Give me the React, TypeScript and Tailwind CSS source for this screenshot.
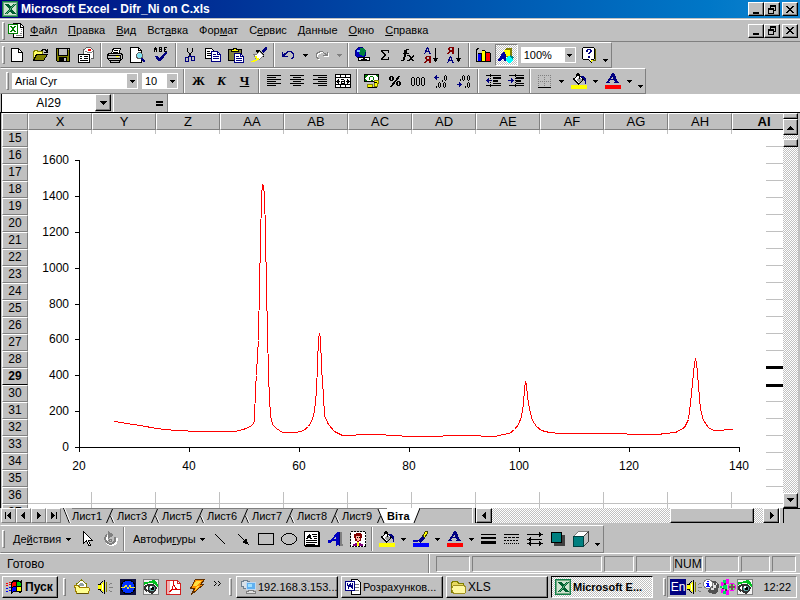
import type { ReactNode } from 'react';

const columns = ['X', 'Y', 'Z', 'AA', 'AB', 'AC', 'AD', 'AE', 'AF', 'AG', 'AH', 'AI'];
const rows = Array.from({ length: 23 }, (_, i) => i + 15);
const sheets = ['Лист1', 'Лист3', 'Лист5', 'Лист6', 'Лист7', 'Лист8', 'Лист9'];

// text before the accelerator, the accelerator, text after it
const menus = [
  ['', 'Ф', 'айл'],
  ['', 'П', 'равка'],
  ['', 'В', 'ид'],
  ['Вст', 'а', 'вка'],
  ['Фор', 'м', 'ат'],
  ['С', 'е', 'рвис'],
  ['', 'Д', 'анные'],
  ['', 'О', 'кно'],
  ['', 'С', 'правка'],
];

const raised = 'border border-t-white border-l-white border-r-black border-b-black bg-[#c0c0c0] shadow-[inset_-1px_-1px_#808080]';
const sunken = 'border border-t-[#808080] border-l-[#808080] border-r-white border-b-white';
const dither = 'bg-[repeating-conic-gradient(#c0c0c0_0_25%,#fff_0_50%)] bg-size-[2px_2px]';

function Icon({ children, w = 16 }: { children: ReactNode; w?: number }) {
  return (
    <svg width={w} height="16" viewBox={`0 0 ${w} 16`} fill="none" shapeRendering="crispEdges" className="shrink-0" aria-hidden="true">
      {children}
    </svg>
  );
}

function Tool({ label, children, on }: { label: string; children: ReactNode; on?: boolean }) {
  return (
    <button
      aria-label={label}
      className={`flex h-[22px] w-[23px] shrink-0 items-center justify-center ${on ? `${sunken} ${dither}` : ''}`}
    >
      {children}
    </button>
  );
}

function Caret({ gray }: { gray?: boolean }) {
  return (
    <svg width="5" height="3" viewBox="0 0 5 3" shapeRendering="crispEdges" className="shrink-0" aria-hidden="true">
      <path d="M0 0h5v1H0zM1 1h3v1H1zM2 2h1v1H2z" fill={gray ? '#808080' : '#000'} />
    </svg>
  );
}

function Drop({ label, gray }: { label: string; gray?: boolean }) {
  return (
    <button aria-label={label} className="flex h-[22px] w-[11px] shrink-0 items-center justify-center">
      <Caret gray={gray} />
    </button>
  );
}

function More({ label }: { label: string }) {
  return (
    <button aria-label={label} className="flex h-[22px] w-[11px] shrink-0 items-end justify-center pb-1">
      <Caret />
    </button>
  );
}

function Sep() {
  return (
    <div className="flex h-6 w-[6px] shrink-0 justify-center">
      <div className="w-[2px] border-l border-l-[#808080] bg-white" />
    </div>
  );
}

function Grip() {
  return <div className="h-[18px] w-[3px] shrink-0 border border-t-white border-l-white border-r-[#808080] border-b-[#808080]" />;
}

function Combo({ label, value, width }: { label: string; value: string; width: string }) {
  return (
    <div className={`relative h-4 shrink-0 bg-white ${width}`}>
      <select aria-label={label} className="block h-4 w-full appearance-none pl-[3px] text-[11px] leading-4 outline-none">
        <option>{value}</option>
      </select>
      <span className="pointer-events-none absolute inset-y-px right-px flex w-[10px] items-center justify-center bg-[#c0c0c0]">
        <Caret />
      </span>
    </div>
  );
}

function ExcelIcon() {
  return (
    <Icon>
      <path d="M0 0h16v16H0z" fill="#108048" />
      <path d="M1.5 1.5h13v13h-13z" fill="#d0e4d0" stroke="#70a880" />
      <path d="M3 3h4l2 3 2-3h3l-4 5 4 5h-4l-2-3-2 3H3l4-5z" fill="#006030" />
      <path d="M12 3h1l-8 10H4z" fill="#60b080" />
    </Icon>
  );
}

function WorkbookIcon() {
  return (
    <Icon>
      <path d="M5.5.5h7l3 3v11h-10z" fill="#fff" stroke="#000" />
      <path d="M12 1v3h3" stroke="#000" />
      <path d="M13 6h1M13 8h1M8 12.5h6M12 10.5h2" stroke="#808080" />
      <path d="M.5 1.5h9v9h-9z" fill="#fff" stroke="#008000" />
      <path d="M2 3h2l1 2 1-2h2L6 6l2 3H6L5 7 4 9H2l2-3z" fill="#008000" />
    </Icon>
  );
}

function WindowButtons() {
  return (
    <div className="flex gap-[2px]">
      <div className="flex">
        <button aria-label="Свернуть" className={`flex h-[14px] w-4 items-center justify-center ${raised}`}>
          <svg width="10" height="9" viewBox="0 0 10 9" shapeRendering="crispEdges" aria-hidden="true"><path d="M2 7h6v2H2z" /></svg>
        </button>
        <button aria-label="Восстановить" className={`flex h-[14px] w-4 items-center justify-center ${raised}`}>
          <svg width="10" height="9" viewBox="0 0 10 9" fill="none" stroke="#000" shapeRendering="crispEdges" aria-hidden="true">
            <path d="M3.5 3V.5h5v5H7M3 1.5h6M1.5 3.5h5v5h-5zM1 4.5h6" />
          </svg>
        </button>
      </div>
      <button aria-label="Закрыть" className={`flex h-[14px] w-4 items-center justify-center ${raised}`}>
        <svg width="10" height="9" viewBox="0 0 10 9" shapeRendering="crispEdges" aria-hidden="true">
          <path d="M1 1h2v1h1v1h2V2h1V1h2v1H8v1H7v1H6v1h1v1h1v1h1v1H7V7H6V6H4v1H3v1H1V7h1V6h1V5h1V4H3V3H2V2H1z" />
        </svg>
      </button>
    </div>
  );
}

function Bucket({ color }: { color: string }) {
  return (
    <Icon>
      <path d="M2.500 6l5-4 5 4-5 5z" fill="#fff" stroke="#000" />
      <path d="M5 7l3-3 3 3-3 3z" fill="#a0a0a0" />
      <path d="M8.500 6V1.500h-1v-1h-1v1h-1V4" stroke="#000" />
      <path d="M10 3h3v1h1v1h1v6h-1V8h-1V6h-1V5h-2z" fill="#000080" />
      <path d="M0 12h16v4H0z" fill={color} />
    </Icon>
  );
}

function FontColor() {
  return (
    <Icon>
      <path d="M7 0h2l4 9h1v1H9V9h1L9 7H5L4 9h1v1H1V9h1l4-7zM8 3L6 6h2z" fill="#000080" fillRule="evenodd" />
      <path d="M0 12h16v4H0z" fill="#f00" />
    </Icon>
  );
}

function Lines({ rows: lines }: { rows: [number, number][] }) {
  return (
    <Icon>
      {lines.map(([x, w], i) => (
        <path key={i} d={`M${x} ${i * 2 + 2.5}h${w}`} stroke="#000" />
      ))}
    </Icon>
  );
}

function EyeIcon() {
  return (
    <Icon>
      <path d="M.5.5h15v15H.5z" fill="#f4f4f4" stroke="#808080" />
      <path d="M1 3l4 0 5-2 3 1 2 4v3l-3-4-5-1-4 1-2 1z" fill="#00c020" />
      <path d="M1 7l4-2 5 0 4 3-1 4-4 3-5-3 0 2-3-4z" fill="#303030" />
      <path d="M2 9l3-2v4z" fill="#fff" />
      <circle cx="9" cy="9.5" r="3" fill="#60a0a0" />
      <path d="M8 8h3v3H8z" fill="#000" />
      <path d="M7 7h2v2H7z" fill="#fff" />
    </Icon>
  );
}

function SpeakerIcon() {
  return (
    <Icon>
      <path d="M1 6h3l4-5v14l-4-5H1z" fill="#ff0" />
      <path d="M1 5.500h2M1 10.500h2M3.500 4v2M4.500 3v1M5.500 2v1M3.500 10v2M4.500 12v1M5.500 13v1M7.500 1v14" stroke="#000" />
      <path d="M5 5h1v6H5z" fill="#fff" />
      <path d="M9 3h1v10H9z" fill="#808000" />
      <path d="M12 5.500h1M13 4.500h2M12 8.500h4M12 11.500h1M13 12.500h2" stroke="#808080" />
    </Icon>
  );
}

function FolderIcon() {
  return (
    <Icon>
      <path d="M1.5 4.5l1-2h5l1 2h5v9h-12z" fill="#e8d860" stroke="#808000" />
      <path d="M3.5 6.5h11l1 2v5l-1 1h-11l-2-5z" fill="#fff8a0" stroke="#a09020" />
    </Icon>
  );
}

function StandardBar() {
  return (
    <div className="flex h-[26px] w-[612px] items-center border border-t-white border-l-transparent border-r-[#808080] border-b-[#808080] pl-px">
      <Grip />
      <div className="w-px" />
      <Tool label="Создать">
        <Icon>
          <path d="M2.5 1.5h7l4 4v9h-11z" fill="#fff" stroke="#000" />
          <path d="M9.5 1.5v4h4" stroke="#000" />
        </Icon>
      </Tool>
      <Tool label="Открыть">
        <Icon>
          <path d="M9 3.5h1v-1h3v1h1v1M15.5 2v3.5H12" stroke="#000" />
          <path d="M1.5 13.5v-9h1v-1h3v1h5v3" fill="#ffff80" stroke="#808000" />
          <path d="M1.5 13.5l3-6h11l-4 6z" fill="#808000" stroke="#000" />
          <path d="M2 5h8v2H4l-2 4z" fill="#ffff60" />
        </Icon>
      </Tool>
      <Tool label="Сохранить">
        <Icon>
          <path d="M1.5 1.5h13v13h-12l-1-1z" fill="#808000" stroke="#000" />
          <path d="M4 2h8v6H4z" fill="#c0c0c0" />
          <path d="M3.5 2v6.5h9V2" stroke="#000" />
          <path d="M4 10h8v4H4z" fill="#000" />
          <path d="M9 11h2v3H9zM13 2h1v1h-1z" fill="#c0c0c0" />
        </Icon>
      </Tool>
      <Tool label="Сообщение">
        <Icon>
          <path d="M5.5 7V3l3-2.500h4l3 3v8h-3" fill="#fff" stroke="#606060" />
          <path d="M7 4.500h2M9 5.500h5M14 4.500h1" stroke="#808080" />
          <path d="M10 2h3v2h-3z" fill="#f00" />
          <path d="M.5 7.5h11v8H.5z" fill="#fff" stroke="#000" />
          <path d="M2 9.5h2M6 9.5h4M2 11.5h2M6 11.5h4M2 13.5h8" stroke="#000" />
        </Icon>
      </Tool>
      <Sep />
      <Tool label="Печать">
        <Icon>
          <path d="M4.500 6l2-4.500h7L12 6z" fill="#fff" stroke="#000" />
          <path d="M7 3.5h4M6 5.5h5" stroke="#000" />
          <path d="M.5 7.5l2-1h11l2 1v4l-2 2h-11l-2-2z" fill="#c0c0c0" stroke="#000" />
          <path d="M1 8.5h12M1 11.5h12M13.5 8v5M3 13v2.5h9V13" stroke="#000" />
          <path d="M9 9h3v1H9z" fill="#ff0" />
        </Icon>
      </Tool>
      <Tool label="Предварительный просмотр">
        <Icon>
          <path d="M.5.5h8l3 3v12H.5z" fill="#fff" stroke="#000" />
          <path d="M8.5.5v3h3" stroke="#000" />
          <circle cx="9.5" cy="8.5" r="3" fill="#80e0f0" stroke="#606060" />
          <path d="M11 11h2v1h1v1h1v2h-2v-1h-1v-1h-1z" fill="#000080" />
        </Icon>
      </Tool>
      <Tool label="Орфография">
        <Icon>
          <path d="M1 5V1h1V0h1v1h1v4H3V3H2v2zM6 0h3v5H6zM7 1v1h1V1zM7 3v1h1V3zM11 0h3v1h-2v1h1v1h-1v1h2v1h-3z" fill="#000" fillRule="evenodd" />
          <path d="M2 9h2l2 2 7-6h1v1l-6 8H5z" fill="#000080" />
        </Icon>
      </Tool>
      <Sep />
      <Tool label="Вырезать">
        <Icon>
          <path d="M5.5 1v3l4 6M10.5 1v3l-4 6" stroke="#000" />
          <path d="M3.5 10.5h3v4h-3zM9.5 9.5h3v4h-3z" stroke="#000080" />
          <path d="M7 8h2v2H7z" fill="#000080" />
        </Icon>
      </Tool>
      <Tool label="Копировать">
        <Icon>
          <path d="M.5 1.5h6l3 3v7h-9z" fill="#fff" stroke="#000" />
          <path d="M2 4.5h3M2 6.5h5M2 8.5h5" stroke="#000" />
          <path d="M6.5 4.5h6l3 3v7h-9z" fill="#fff" stroke="#000080" />
          <path d="M12.5 4.5v3h3M8 7.5h3M8 9.5h6M8 11.5h6" stroke="#000080" />
        </Icon>
      </Tool>
      <Tool label="Вставить">
        <Icon>
          <path d="M.5 2.5h13v11H.5z" fill="#808040" stroke="#000" />
          <path d="M3.500 4.500v-2h2v-1h3v1h2v2z" fill="#ff0" stroke="#000" />
          <path d="M6.5 6.5h6l3 3v6h-9z" fill="#fff" stroke="#000080" />
          <path d="M12.5 6.5v3h3M8 9.5h3M8 11.5h6M8 13.5h6" stroke="#000080" />
        </Icon>
      </Tool>
      <Tool label="Формат по образцу">
        <Icon>
          <path d="M14 0h2v2l-4 4-2-2z" fill="#000080" />
          <path d="M5 3h3l5 5v2h-2L5 5z" fill="#000" />
          <path d="M2.500 7.500h3l3-3 4 4-4 4h-3z" fill="#fff" stroke="#808080" />
          <path d="M4 9h2v2h2v2H6v1H4v1H0v-1h2v-1h3v-2H4z" fill="#ff0" />
        </Icon>
      </Tool>
      <Sep />
      <Tool label="Отменить">
        <Icon>
          <path d="M2 5h1v2h1V6h2V5h1V4h5v1h1v1h1v5h-1v1h-2v-1h1v-1h1V7h-1V6h-1V5H8v1H7v1H6v1H5v1h3v1H2z" fill="#000080" />
        </Icon>
      </Tool>
      <Drop label="Список отмены" />
      <Tool label="Вернуть">
        <Icon>
          <path d="M15 6h-1v2h-1V7h-2V6h-1V5H6v1H4v1H3v5h1v1h2v-1H5v-1H4V8h1V7h2V6h3v1h1v1h1v1h-2v1h5z" fill="#fff" />
          <path d="M14 5h-1v2h-1V6h-2V5H9V4H5v1H3v1H2v5h1v1h2v-1H4v-1H3V7h1V6h2V5h3v1h1v1h1v1H9v1h5z" fill="#808080" />
        </Icon>
      </Tool>
      <Drop label="Список возврата" gray />
      <Sep />
      <Tool label="Гиперссылка">
        <Icon>
          <circle cx="6.500" cy="6" r="5.5" fill="#0000c0" stroke="#000080" />
          <path d="M6 1h4l2 3-2 5-4-1-1-3z" fill="#008040" />
          <path d="M3 3h3v2H3z" fill="#80c0ff" />
          <path d="M4.5 10.5h5v3h-5zM10.5 10.5h5v3h-5z" fill="#fff" stroke="#000" />
          <path d="M7 12h6" stroke="#000" />
        </Icon>
      </Tool>
      <Tool label="Автосумма">
        <Icon>
          <path d="M4 3h8v3h-1V4H6l3 4-3 4h5v-2h1v3H4v-1l3-4-3-4z" fill="#000" />
        </Icon>
      </Tool>
      <Tool label="Вставка функции">
        <Icon>
          <path d="M6 2h3v1H7v3h2v1H6l-1 6H4v1H1v-1h2l1-6H3V6h1V3h2z" fill="#000" />
          <path d="M7 8h2l2 2 2-2h1v1l-2 2 1 2h1v1h-2l-1-2-2 2H7v-1h1l2-2-1-2H7z" fill="#000" />
        </Icon>
      </Tool>
      <Tool label="Сортировка по возрастанию">
        <Icon>
          <path d="M4 0h1l3 7H6V5H3L2 7H1zM4 2v2h1V2z" fill="#000080" />
          <path d="M3 9h5v7H6v-2H4l-2 2H1l2-3-1-1v-2zM4 10v2h2v-2z" fill="#800000" fillRule="evenodd" />
          <path d="M12 1h1v10h2l-2 4h-1l-2-4h2z" fill="#000" />
        </Icon>
      </Tool>
      <Tool label="Сортировка по убыванию">
        <Icon>
          <path d="M3 0h5v7H6V5H4L2 7H1l2-3-1-1V1zM4 1v2h2V1z" fill="#800000" fillRule="evenodd" />
          <path d="M4 9h1l3 7H6v-2H3l-1 2H1zM4 11v2h1v-2z" fill="#000080" fillRule="evenodd" />
          <path d="M12 1h1v10h2l-2 4h-1l-2-4h2z" fill="#000" />
        </Icon>
      </Tool>
      <Sep />
      <Tool label="Мастер диаграмм">
        <Icon>
          <path d="M1.5 14V3l2-2M1 14.5h15" stroke="#000" />
          <path d="M3.500 7.500l1-1h1v7h-2z" fill="#00f" stroke="#00f" />
          <path d="M6.500 6v8M10.500 4v10M15.500 6v8M3 6.500h3M7 3.500h3M11 5.500h4" stroke="#000" />
          <path d="M7 4h3v10H7z" fill="#ff0" />
          <path d="M11 6h4v8h-4z" fill="#f00" />
        </Icon>
      </Tool>
      <Tool label="Рисование" on>
        <Icon>
          <path d="M6 3l2-2h6v7l-2 2H6z" fill="#808000" />
          <path d="M6 3h6v6H6z" fill="#ff0" />
          <path d="M0 13l5-8h2l2 8v1H6v-2H4l-1 2H0z" fill="#0000a0" />
          <path d="M8 11l3-2 4 1v3l-2 3h-3l-2-2z" fill="#0ff" />
          <path d="M12 8l4 2-1 3-3-3z" fill="#008080" />
        </Icon>
      </Tool>
      <Combo label="Масштаб" value="100%" width="ml-[3px] w-[55px]" />
      <div className="w-[2px]" />
      <Tool label="Справка">
        <Icon>
          <path d="M2.5.5h10l1 1v10l-1 1h-2v3l-3-3h-5l-1-1v-10z" fill="#fff" stroke="#000" />
          <path d="M14.5 2v11.5H12" stroke="#606000" />
          <path d="M10 13h2v1h-1v1h-1z" fill="#ff0" />
          <path d="M5 3h1V2h4v1h1v2h-1v1H9v1H7V6h1V5h1V3H7v2H5zM7 9h2v2H7z" fill="#000080" />
        </Icon>
      </Tool>
      <More label="Другие кнопки стандартной панели" />
    </div>
  );
}

function FormattingBar() {
  return (
    <div className="flex h-[26px] w-[646px] items-center border border-t-white border-l-transparent border-r-[#808080] border-b-[#808080] pl-[5px]">
      <Grip />
      <Combo label="Шрифт" value="Arial Cyr" width="ml-[3px] w-[126px]" />
      <Combo label="Размер" value="10" width="ml-1 mr-[3px] w-[36px]" />
      <Sep />
      <Tool label="Полужирный"><span className="font-['Liberation_Serif'] text-[13px] leading-4 font-bold">Ж</span></Tool>
      <Tool label="Курсив"><span className="font-['Liberation_Serif'] text-[13px] leading-4 font-bold italic">К</span></Tool>
      <Tool label="Подчеркнутый"><span className="font-['Liberation_Serif'] text-[13px] leading-4 font-bold underline">Ч</span></Tool>
      <Sep />
      <Tool label="По левому краю"><Lines rows={[[1, 14], [1, 9], [1, 14], [1, 9], [1, 14], [1, 9]]} /></Tool>
      <Tool label="По центру"><Lines rows={[[1, 14], [4, 8], [1, 14], [4, 8], [1, 14], [4, 8]]} /></Tool>
      <Tool label="По правому краю"><Lines rows={[[1, 14], [6, 9], [1, 14], [6, 9], [1, 14], [6, 9]]} /></Tool>
      <Tool label="Объединить и поместить в центре">
        <Icon>
          <path d="M.5 1.5h15v13H.5z" fill="#fff" stroke="#000" />
          <path d="M0 4.5h16M0 11.5h16M5.5 1v3M10.5 1v3M5.5 12v3M10.5 12v3" stroke="#000" />
          <path d="M1 8h1V7h1V6h1v2h1v1H4v2H3v-1H2V9H1zM15 8h-1V7h-1V6h-1v2h-1v1h1v2h1v-1h1V9h1z" fill="#000" />
          <path d="M6 6h3v1h1v4H6V8h3V7H6zM7 9v1h2V9z" fill="#000" fillRule="evenodd" />
        </Icon>
      </Tool>
      <Sep />
      <Tool label="Денежный формат">
        <Icon>
          <path d="M.5 1.5h14v7H.5z" fill="#fff" stroke="#000" />
          <path d="M1 2h3L1 5zM11 2h3v3zM1 8V6l3 2z" fill="#008000" />
          <path d="M6 3.5h3M5.5 4v3M9.5 4v3M7 7.500h2" stroke="#008000" />
          <path d="M10 7h4v3h-1v3h-3z" fill="#ff0" stroke="#808000" />
          <path d="M3 11h5v3H3z" fill="#ff0" stroke="#808000" />
          <path d="M10 9.5h3M4 14.5h9" stroke="#000" />
        </Icon>
      </Tool>
      <Tool label="Процентный формат">
        <Icon>
          <path d="M2 4h1V3h3v1h1v3H6v1H3V7H2zM4 4v3h1V4zM9 9h1V8h3v1h1v3h-1v1h-3v-1H9zM11 9v3h1V9z" fill="#000" fillRule="evenodd" />
          <path d="M12 3h1L5 13H4z" fill="#000" stroke="#000" />
        </Icon>
      </Tool>
      <Tool label="Формат с разделителями">
        <Icon>
          <path d="M2 4.500h2M2 12.500h2M1.500 5v7M4.500 5v7M7 4.500h2M7 12.500h2M6.500 5v7M9.500 5v7M12 4.500h2M12 12.500h2M11.500 5v7M14.500 5v7" stroke="#000" />
        </Icon>
      </Tool>
      <Tool label="Увеличить разрядность">
        <Icon>
          <path d="M1 4h1V3h1V2h1v2h2v1H4v2H3V6H2V5H1z" fill="#000080" />
          <path d="M9.5 7v2M12 2.500h1M12 7.500h1M11.500 3v4M13.500 3v4M3.500 13v2M6 9.500h1M6 14.500h1M5.500 10v4M7.500 10v4M11 9.500h1M11 14.500h1M10.500 10v4M12.500 10v4" stroke="#000" />
        </Icon>
      </Tool>
      <Tool label="Уменьшить разрядность">
        <Icon>
          <path d="M6 11H5v-1H4V9H3v2H1v1h2v2h1v-1h1v-1h1z" fill="#000080" />
          <path d="M4.500 6v2M7 2.500h1M7 7.500h1M6.500 3v4M8.500 3v4M12 2.500h1M12 7.500h1M11.500 3v4M13.500 3v4M9.500 13v2M12 9.500h1M12 14.500h1M11.500 10v4M13.500 10v4" stroke="#000" />
        </Icon>
      </Tool>
      <Sep />
      <Tool label="Уменьшить отступ">
        <Icon>
          <path d="M1 2.5h15M1 12.5h15" stroke="#000" />
          <path d="M8 4h8v2H8zM8 7h5v2H8zM8 10h8v1H8z" fill="#000" />
          <path d="M1 7h1V6h1V5h1v2h3v1H4v2H3V9H2V8H1z" fill="#000080" />
          <path d="M5.5 1v14" stroke="#000" strokeDasharray="1 1" />
        </Icon>
      </Tool>
      <Tool label="Увеличить отступ">
        <Icon>
          <path d="M1 2.5h15M1 12.5h15" stroke="#000" />
          <path d="M8 4h8v2H8zM8 7h5v2H8zM8 10h8v1H8z" fill="#000" />
          <path d="M6 7H5V6H4V5H3v2H0v1h3v2h1V9h1V8h1z" fill="#000080" />
          <path d="M7.5 1v14" stroke="#000" strokeDasharray="1 1" />
        </Icon>
      </Tool>
      <Sep />
      <Tool label="Границы">
        <Icon>
          <path d="M1 2.5h13M1 8.5h13M1.5 2v12M7.5 2v12M13.5 2v12" stroke="#808080" strokeDasharray="1 1" />
          <path d="M1 14.5h13" stroke="#000" />
        </Icon>
      </Tool>
      <Drop label="Виды границ" />
      <Tool label="Цвет заливки"><Bucket color="#ff0" /></Tool>
      <Drop label="Список цветов заливки" />
      <Tool label="Цвет шрифта"><FontColor /></Tool>
      <Drop label="Список цветов шрифта" />
      <More label="Другие кнопки форматирования" />
    </div>
  );
}

function FormulaBar() {
  return (
    <div className="flex h-[18px] pl-px text-[12px] leading-[17px]">
      <input aria-label="Имя" defaultValue="AI29" className="w-[94px] border-l border-black bg-white text-center outline-none" />
      <button aria-label="Список имён" className={`flex h-[17px] w-4 items-center justify-center ${raised}`}>
        <svg width="7" height="4" viewBox="0 0 7 4" shapeRendering="crispEdges" aria-hidden="true"><path d="M0 0h7v1H0zM1 1h5v1H1zM2 2h3v1H2zM3 3h1v1H3z" /></svg>
      </button>
      <button aria-label="Изменить формулу" className="ml-[2px] flex w-[54px] items-center justify-end border-l border-white pr-1">
        <svg width="7" height="5" viewBox="0 0 7 5" shapeRendering="crispEdges" aria-hidden="true"><path d="M0 0h7v2H0zM0 3h7v2H0z" /></svg>
      </button>
      <input aria-label="Строка формул" className="min-w-0 flex-1 border-l border-[#808080] bg-white outline-none" />
    </div>
  );
}

const curve =
  '114,421 126,423 140,425 156,428 175,430 200,431 234,431 243,429 252,425 254,420 255,387 256,375 257,353 258,340 259,283 260,243 261,195 262,184 263,185 264,196 265,231 266,289 267,331 268,374 269,398 270,415 272,424 276,428 282,432 296,432 303,430 308,426 312,419 314,411 316,390 317,365 318,337 319,334 320,337 321,367 322,381 323,396 324,415 328,424 334,431 342,435 352,435 360,434 378,434 392,435 410,436 435,436 450,435 475,435 485,436 495,436 502,434 509,433 514,429 518,424 521,416 523,403 524,388 525,381 526,384 527,396 529,409 532,420 536,426 541,430 549,432 560,433 600,433 652,434 658,434 664,433 675,432 684,427 688,419 690,403 692,383 694,362 695,359 696,362 698,385 700,409 703,420 708,427 713,430 722,430 725,429 732,429';

function Chart() {
  return (
    <svg
      viewBox="28 134 738 358"
      width="738"
      height="358"
      fill="none"
      className="absolute top-[21px] left-[26px] bg-white font-['Liberation_Sans'] text-[12px]"
      role="img"
      aria-label="Дифрактограмма"
    >
      <g stroke="#000" shapeRendering="crispEdges">
        <path d="M79.5 160v288M79 447.5h661" />
        {[160, 196, 232, 268, 304, 339, 375, 411, 447].map(y => (
          <path key={y} d={`M75 ${y + 0.5}h4`} />
        ))}
        {[79, 189, 299, 409, 519, 629, 739].map(x => (
          <path key={x} d={`M${x + 0.5} 448v4`} />
        ))}
      </g>
      <g fill="#000" textAnchor="end">
        {[160, 196, 232, 268, 304, 339, 375, 411, 447].map((y, i) => (
          <text key={y} x="69" y={y + 4}>{1600 - i * 200}</text>
        ))}
      </g>
      <g fill="#000" textAnchor="middle">
        {[79, 189, 299, 409, 519, 629, 739].map((x, i) => (
          <text key={x} x={x} y="470">{20 + i * 20}</text>
        ))}
      </g>
      <polyline points={curve} transform="translate(0.5 0.5)" stroke="#f00" shapeRendering="crispEdges" />
    </svg>
  );
}

function Sheet() {
  return (
    <div className="relative min-w-0 flex-1 overflow-hidden bg-white">
      <table className="w-[794px] table-fixed border-separate border-spacing-0 text-[13px] leading-[15px]">
        <thead>
          <tr>
            <td className="h-[17px] w-[26px] border border-t-white border-l-white border-r-[#808080] border-b-[#808080] bg-[#c0c0c0] p-0" />
            {columns.map(c => (
              <th
                key={c}
                className={`h-[17px] w-16 border border-t-white border-l-white border-r-[#808080] bg-[#c0c0c0] p-0 ${c === 'AI' ? 'border-b-black font-bold' : 'border-b-[#808080] font-normal'}`}
              >
                {c}
              </th>
            ))}
          </tr>
        </thead>
        <tbody>
          {rows.map(r => (
            <tr key={r}>
              <th
                className={`h-[17px] border border-t-white border-l-white border-r-[#808080] bg-[#c0c0c0] p-0 text-[12px] ${r === 29 ? 'border-b-black font-bold' : 'border-b-[#808080] font-normal'}`}
              >
                {r}
              </th>
              {columns.map(c => (
                <td
                  key={c}
                  className={`border-r border-b border-[#c0c0c0] p-0 ${r === 29 && c === 'AI' ? 'outline-3 -outline-offset-1 outline-black' : ''}`}
                />
              ))}
            </tr>
          ))}
        </tbody>
      </table>
      <Chart />
    </div>
  );
}

function Arrow({ d }: { d: string }) {
  return (
    <svg width="7" height="7" viewBox="0 0 7 7" shapeRendering="crispEdges" aria-hidden="true">
      <path d={d} />
    </svg>
  );
}

const up = 'M3 2h1v1h1v1h1v1h1v1H0V5h1V4h1V3h1z';
const down = 'M0 1h7v1H6v1H5v1H4v1H3V4H2V3H1V2H0z';
const left = 'M4 0h1v7H4V6H3V5H2V4H1V3h1V2h1V1h1z';
const right = 'M2 0h1v1h1v1h1v1h1v1H5v1H4v1H3v1H2z';

function VerticalScroll() {
  return (
    <div className={`flex w-[15px] shrink-0 flex-col ${dither}`}>
      <div className={`h-[6px] ${raised}`} />
      <button aria-label="Вверх" className={`flex h-4 items-center justify-center ${raised}`}><Arrow d={up} /></button>
      <div className="h-[4px]" />
      <div className={`h-2 ${raised}`} />
      <div className="flex-1" />
      <button aria-label="Вниз" className={`flex h-[15px] items-center justify-center ${raised}`}><Arrow d={down} /></button>
    </div>
  );
}

function SheetTabs() {
  const nav = [
    ['Первый лист', 'M0 0h1v7H0zM6 0v7H5V6H4V5H3V4H2V3h1V2h1V1h1V0z'],
    ['Предыдущий лист', left],
    ['Следующий лист', right],
    ['Последний лист', 'M6 0h1v7H6zM1 0v7h1V6h1V5h1V4h1V3H4V2H3V1H2V0z'],
  ];
  return (
    <div className="flex h-[15px] pl-px">
      {nav.map(([label, d]) => (
        <button key={label} aria-label={label} className="flex w-[15px] items-center justify-center border border-t-white border-l-white border-r-[#808080] border-b-[#808080]">
          <Arrow d={d} />
        </button>
      ))}
      <div className="flex w-[411px] text-[11px] leading-[15px]">
        <svg width="11" height="15" viewBox="0 0 11 15" fill="none" className="shrink-0" aria-hidden="true">
          <path d="M2.5 0l6 15" stroke="#000" />
          <path d="M3.5 0l6 15" stroke="#fff" />
        </svg>
        {sheets.map((s, i) => (
          <button key={s} className="flex w-[45px] shrink-0 justify-between border-t border-[#808080]">
            <span>{s}</span>
            <svg width="14" height="14" viewBox="0 0 14 14" fill="none" className="shrink-0" aria-hidden="true">
              {i === sheets.length - 1 && <path d="M5 0h9v14h-3z" fill="#fff" />}
              {i < sheets.length - 1 ? (
                <>
                  <path d="M9.5 0l-6 14M7.5 7l3 7" stroke="#000" />
                  <path d="M8.5 7l3 7" stroke="#fff" />
                </>
              ) : (
                <path d="M5 0l6 14M7.5 7l-3 7" stroke="#000" />
              )}
            </svg>
          </button>
        ))}
        <button className="border-t border-white bg-white pr-px font-bold">Віта</button>
        <svg width="10" height="15" viewBox="0 0 10 15" fill="none" className="shrink-0" aria-hidden="true">
          <path d="M0 0h9L3 15H0z" fill="#fff" />
          <path d="M9 0L3 15" stroke="#000" />
        </svg>
        <div className="flex-1 border-t border-[#808080]" />
      </div>
      <div className="w-[4px] border-r border-l border-l-white border-r-black" />
      <div className={`flex min-w-0 flex-1 ${dither}`}>
        <button aria-label="Влево" className={`flex w-4 items-center justify-center ${raised}`}><Arrow d={left} /></button>
        <div className="flex-1" />
        <div className={`w-[84px] ${raised}`} />
        <div className="w-[9px]" />
        <button aria-label="Вправо" className={`flex w-4 items-center justify-center ${raised}`}><Arrow d={right} /></button>
      </div>
      <div className="w-[5px] border-r border-l border-l-white border-r-black" />
      <div className="w-[16px] border-t border-black" />
    </div>
  );
}

function DrawingBar() {
  return (
    <div className="flex h-7 w-[604px] items-center border border-t-white border-l-transparent border-r-[#808080] border-b-[#808080] pl-px text-[11px]">
      <Grip />
      <button className="flex w-[70px] shrink-0 items-center gap-[5px] pl-[8px]">
        <span>Де<u>й</u>ствия</span>
        <Caret />
      </button>
      <Tool label="Выбор объектов">
        <Icon>
          <path d="M4.5.5v12l3-3 2 5h2l-2-5h4z" fill="#fff" stroke="#000" />
        </Icon>
      </Tool>
      <Tool label="Свободное вращение">
        <Icon>
          <path d="M5 4a5 5 0 1 0 8 2" stroke="#fff" strokeWidth="3" transform="translate(1 1)" />
          <path d="M5 4a5 5 0 1 0 8 2" stroke="#808080" strokeWidth="2" />
          <path d="M6 0l6 4-6 4z" fill="#808080" />
          <circle cx="8.500" cy="9.500" r="1.500" stroke="#808080" />
        </Icon>
      </Tool>
      <Sep />
      <button className="flex w-[81px] shrink-0 items-center justify-between pr-[3px] pl-[6px]">
        <span>Автофи<u>г</u>уры</span>
        <Caret />
      </button>
      <Tool label="Линия"><Icon><path d="M3 3l10 10" stroke="#000" /></Icon></Tool>
      <Tool label="Стрелка">
        <Icon>
          <path d="M3 3l8 8" stroke="#000" />
          <path d="M7 11l4-4 3 7z" fill="#000" />
        </Icon>
      </Tool>
      <Tool label="Прямоугольник"><Icon><path d="M.5 2.5h15v11H.5z" stroke="#000" /></Icon></Tool>
      <Tool label="Овал"><Icon><ellipse cx="8" cy="8" rx="7.5" ry="5.5" stroke="#000" /></Icon></Tool>
      <Tool label="Надпись">
        <Icon>
          <path d="M.5.5h14v14H.5z" fill="#fff" stroke="#000" />
          <path d="M2 8l3-5h1l2 5H6V7H4v1z" fill="#000" />
          <path d="M8 3.5h5M9 5.5h4M10 7.5h3M2 9.5h11M2 11.5h11M2 13.5h9M15.5 1v14.5H1" stroke="#000" />
        </Icon>
      </Tool>
      <Tool label="Добавить объект WordArt">
        <Icon>
          <path d="M12 1h3v10l1 4h-4z" fill="#808080" />
          <path d="M1 9h3l6-8h2v13h-1l-2 1v-5H6l-3 2H1zM9 5L7 8h2z" fill="#0000c0" fillRule="evenodd" />
          <path d="M12.5 1v14" stroke="#000080" />
        </Icon>
      </Tool>
      <Tool label="Добавить картинку">
        <Icon>
          <path d="M.5.5h15v15H.5z" fill="#fff" stroke="#000" strokeDasharray="2 1" />
          <path d="M4 3h2V2h5v1h1v4h-1v3H9v1H7v-1H5V7H4z" fill="#800000" />
          <path d="M6 5h4v4H9v1H7V8H6z" fill="#ffb0a0" />
          <path d="M7 6h1v1H7zM9 6h1v1H9z" fill="#000" />
          <path d="M3 13h2v-1h6v1h2v2H3z" fill="#800080" />
          <path d="M7 11h2v4H7z" fill="#ff0" />
        </Icon>
      </Tool>
      <Sep />
      <Tool label="Заливка"><Bucket color="#ff0" /></Tool>
      <Drop label="Цвета заливки" />
      <Tool label="Цвет линий">
        <Icon>
          <path d="M12.500.5h2v2l-3 4-2-1z" fill="#ff0" stroke="#404000" />
          <path d="M9 5l3 2-4 5-3-2z" fill="#000080" />
          <path d="M0 9h5v2H0zM6 8h1v1H6z" fill="#0000c0" />
          <path d="M0 12h16v4H0z" fill="#00f" />
        </Icon>
      </Tool>
      <Drop label="Цвета линий" />
      <Tool label="Цвет шрифта надписи"><FontColor /></Tool>
      <Drop label="Цвета шрифта надписи" />
      <Tool label="Тип линии">
        <Icon>
          <path d="M0 3h15v1H0zM0 6h15v2H0zM0 10h15v3H0z" fill="#000" />
        </Icon>
      </Tool>
      <Tool label="Тип штриха">
        <Icon>
          <path d="M0 3.5h15" stroke="#000" />
          <path d="M0 6.5h15" stroke="#000" strokeDasharray="3 1" />
          <path d="M0 9.5h15" stroke="#000" strokeDasharray="2 1" />
          <path d="M0 12.5h15" stroke="#000" strokeDasharray="1 1" />
        </Icon>
      </Tool>
      <Tool label="Вид стрелки">
        <Icon>
          <path d="M0 3.5h15M1 8.5h14M2 12.5h13" stroke="#000" />
          <path d="M12 1l4 2.5-4 2.500zM4 6L0 8.500 4 11zM12 10l4 2.500-4 2.500zM4 10l-4 2.500L4 15z" fill="#000" />
        </Icon>
      </Tool>
      <Tool label="Тень">
        <Icon>
          <path d="M4 4h11v11H4z" fill="#404040" />
          <path d="M1.5 1.5h10v10h-10z" fill="#008080" stroke="#000" />
        </Icon>
      </Tool>
      <Tool label="Объём">
        <Icon>
          <path d="M.5 5.5l5-5h10l-5 5z" fill="#fff" stroke="#808080" />
          <path d="M10.5 5.5l5-5v10l-5 5z" fill="#c0c0c0" stroke="#404040" />
          <path d="M.5 5.5h10v10H.5z" fill="#008080" stroke="#004040" />
        </Icon>
      </Tool>
      <More label="Другие кнопки рисования" />
    </div>
  );
}

function StatusBar() {
  return (
    <div className="flex h-5 items-center gap-[2px] border-t border-white pr-1 text-[12px]">
      <div className="flex-1 pl-[7px] leading-[18px]">Готово</div>
      <div className="mr-1 h-[19px] w-[2px] border-l border-[#808080] bg-white" />
      <div className={`h-4 w-[34px] ${sunken}`} />
      <div className={`h-4 w-[130px] ${sunken}`} />
      <div className={`h-4 w-[30px] ${sunken}`} />
      <div className={`h-4 w-[35px] ${sunken}`} />
      <div className={`flex h-4 w-[30px] items-center justify-center leading-[14px] ${sunken}`}>NUM</div>
      <div className={`h-4 w-[34px] ${sunken}`} />
      <div className={`h-4 w-[29px] ${sunken}`} />
      <div className={`h-4 w-[24px] ${sunken}`} />
    </div>
  );
}

function TaskButton({ icon, children, active }: { icon: ReactNode; children: ReactNode; active?: boolean }) {
  return (
    <button
      className={`flex h-[22px] w-[102px] shrink-0 items-center gap-[2px] overflow-hidden pl-[3px] whitespace-nowrap ${
        active ? `border border-t-black border-l-black border-r-white border-b-white font-bold ${dither}` : raised
      }`}
    >
      {icon}
      {children}
    </button>
  );
}

function Taskbar() {
  return (
    <div className="flex h-[27px] items-center border-t border-white pr-[3px] pl-[2px] text-[11px]">
      <button className={`flex h-[22px] w-[56px] shrink-0 items-center gap-[2px] pl-[3px] text-[12px] font-bold ${raised}`}>
        <Icon w={17}>
          <path d="M0 4h2v1H0zM3 3h2v1H3zM0 6h2v1H0zM3 5h2v1H3z" fill="#f00" />
          <path d="M0 9h2v1H0zM3 8h2v1H3zM0 12h2v1H0zM3 11h2v1H3z" fill="#00f" />
          <path d="M5 3l3-2h4l2 1 2-1v12l-2 1-2-1H8l-3 2z" fill="#000" />
          <path d="M6 4l2-1h2v4H8L6 8z" fill="#f00" />
          <path d="M11 3h2l2 1v3h-4z" fill="#0c0" />
          <path d="M6 9l2-1h2v4H8l-2 1z" fill="#00f" />
          <path d="M11 8h4v4h-4z" fill="#ff0" />
        </Icon>
        Пуск
      </button>
      <div className="mr-2 ml-[5px]"><Grip /></div>
      <div className="flex w-[155px] shrink-0 items-center gap-[7px]">
        <Icon>
          <path d="M2.500 8V5l5-4 5 4v4z" fill="#fff" stroke="#808000" />
          <path d="M6 4h3v1h1v2H5V5h1z" fill="#90a0a0" />
          <path d="M.5 6.500h4l1 2h9l1 1-1 5h-12z" fill="#ffff90" stroke="#a08000" />
          <path d="M3 14.500h11" stroke="#605000" />
        </Icon>
        <SpeakerIcon />
        <Icon>
          <path d="M0 0h16v16H0z" fill="#101040" />
          <circle cx="8" cy="8" r="7" fill="#0030ff" stroke="#000" />
          <path d="M1 8.5h3l2-2 2 3 2-3 1 2h4" stroke="#e0e040" />
        </Icon>
        <EyeIcon />
        <Icon>
          <path d="M.5 1.5h11l3 3v11H.5z" fill="#fff" stroke="#d02020" />
          <path d="M1 2h3v13H1z" fill="#f0b0b0" />
          <path d="M7.500 2v4l-2 5-2 2M7.500 6l3 4 4 1M5 10.500h6" stroke="#e00000" />
          <path d="M11.5 1.5v3h3" stroke="#d02020" />
        </Icon>
        <Icon>
          <path d="M6.500.5h9l-4 5h3l-12 10 3-6h-4z" fill="#ff9000" stroke="#603000" />
          <path d="M7 2h5L8 7h3l-5 4 2-4H4z" fill="#ffe040" />
        </Icon>
        <svg width="10" height="7" viewBox="0 0 10 7" fill="none" stroke="#000" className="mb-2 shrink-0" aria-hidden="true">
          <path d="M2 1l2.500 2.500L2 6M6 1l2.500 2.500L6 6" />
        </svg>
      </div>
      <Grip />
      <div className="ml-1 flex min-w-0 flex-1 gap-[3px]">
        <TaskButton
          icon={
            <Icon>
              <path d="M1 2h2V1h4v1h2v5H7v2H3V7H1z" fill="#d8e0e8" stroke="#708090" />
              <path d="M6.500 3.500h9v7h-9z" fill="#60b0f0" stroke="#c0d8f0" />
              <path d="M8 5h4v3H8z" fill="#a0e0ff" />
              <path d="M8.500 11.500h5v1h2v2h-9v-2h2z" fill="#e0e0e0" stroke="#808080" />
            </Icon>
          }
        >
          192.168.3.153...
        </TaskButton>
        <TaskButton
          icon={
            <Icon>
              <path d="M6.5.5h6l3 3v12h-9z" fill="#fff" stroke="#000" />
              <path d="M10 5.5h4M10 8.5h4M10 11.5h4" stroke="#808080" />
              <path d="M.5 2.5h9v9h-9z" fill="#fff" stroke="#000080" />
              <path d="M2 4h1l1 3 1-3h1l1 3V4h1v6H7L5 7l-1 3H3z" fill="#000080" />
            </Icon>
          }
        >
          Розрахунков...
        </TaskButton>
        <TaskButton icon={<FolderIcon />}><span className="text-[12px]">XLS</span></TaskButton>
        <TaskButton icon={<ExcelIcon />} active>Microsoft E...</TaskButton>
      </div>
      <Grip />
      <div className={`ml-px flex h-[22px] w-[130px] shrink-0 items-center pr-[5px] pl-[2px] ${sunken}`}>
        <span className="w-4 bg-[#000080] text-center text-[12px] leading-4 text-white">En</span>
        <div className="flex flex-1 gap-px">
          <SpeakerIcon />
          <Icon>
            <path d="M7 2h6l3 4-1 6-3 3-6-1-1-3 4-3z" fill="#505050" />
            <path d="M9 4h2v2h2v3h-2v2H8V9h2V7H9zM13 4h1v2h-1z" fill="#e0e0e0" />
            <circle cx="5" cy="5" r="4.500" fill="#fff" stroke="#808080" />
            <path d="M4 2h2v1H4zM3 4h3v3h1v1H3V7h1V5H3z" fill="#00f" />
          </Icon>
          <Icon>
            <path d="M1 3h3v4H1zM6 0h3v5H6zM1 10h3v4H1zM6 11h3v5H6z" fill="#f0f" />
            <path d="M3 1h3v3H3zM3 6h4v4H3zM3 12h3v3H3zM0 7h2v2H0z" fill="#00e060" />
            <path d="M4 4h2v2H4zM2 9h2v1H2zM5 10h2v2H5z" fill="#404040" />
            <circle cx="12" cy="8" r="3.500" fill="#60ff60" stroke="#f0f" />
            <path d="M11 5h2v6h-2zM9 7h6v2H9z" fill="#804060" />
          </Icon>
          <EyeIcon />
        </div>
        <time>12:22</time>
      </div>
    </div>
  );
}

export default function App() {
  return (
    <div className="flex h-screen flex-col overflow-hidden bg-[#c0c0c0] font-['Liberation_Sans',sans-serif] text-black select-none">
      <header className="flex h-[18px] shrink-0 items-center bg-linear-to-r from-[#000080] to-[#1084d0] pr-[2px] pl-[2px]">
        <ExcelIcon />
        <h1 className="flex-1 pl-[3px] text-[12px] leading-[18px] font-bold text-white">Microsoft Excel - Difr_Ni on C.xls</h1>
        <WindowButtons />
      </header>
      <nav className="mt-px flex h-[23px] shrink-0 items-center border-t border-b border-t-white border-b-[#808080] pr-[2px] pl-[2px] text-[11px]">
        <Grip />
        <div className="ml-[3px]"><WorkbookIcon /></div>
        <div className="flex flex-1 gap-[11px] pl-[6px]">
          {menus.map(([a, b, c]) => (
            <button key={a + b + c}>{a}<u>{b}</u>{c}</button>
          ))}
        </div>
        <WindowButtons />
      </nav>
      <div className="shrink-0">
        <StandardBar />
        <FormattingBar />
        <FormulaBar />
      </div>
      <main className="flex min-h-0 flex-1 border-t border-l border-black pr-[2px] pl-px">
        <Sheet />
        <VerticalScroll />
      </main>
      <div className="shrink-0">
        <SheetTabs />
        <div className="mt-[2px]"><DrawingBar /></div>
        <StatusBar />
        <Taskbar />
      </div>
    </div>
  );
}
